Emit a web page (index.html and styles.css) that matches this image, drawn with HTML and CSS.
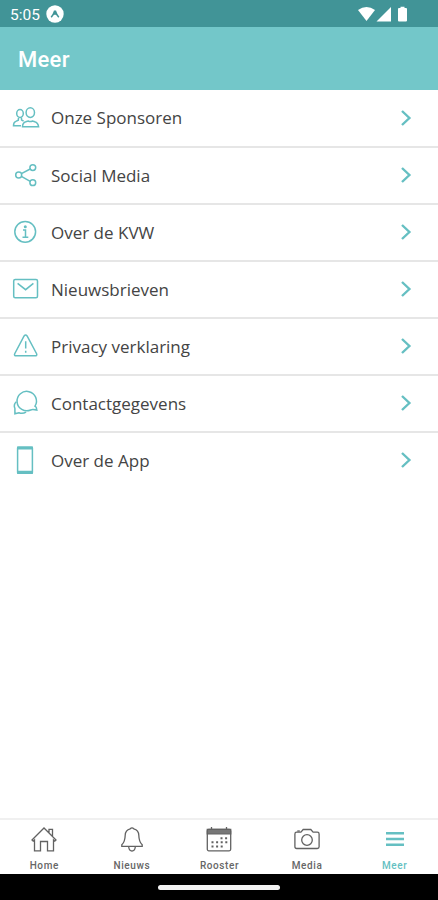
FILE: index.html
```html
<!DOCTYPE html>
<html lang="nl">
<head>
  <meta charset="UTF-8" />
  <meta name="viewport" content="width=device-width, initial-scale=1.0"/>
  <title>Meer</title>
  <link rel="stylesheet" href="styles.css">
</head>
<body>

  <div class="status-bar">
    <span class="time">5:05</span>
    <svg class="app-badge" width="18" height="18" viewBox="0 0 18 18"><circle cx="9" cy="9" r="8.7" fill="#fff"/><path d="M5.2 12.2Q7.6 9.5 8.5 6.2h1Q10.4 9.5 12.8 12.2M7.8 9.6 9 8.2l1.2 1.4" fill="none" stroke="#419497" stroke-width="1.5"/></svg>
    <svg class="signals" width="50" height="17" viewBox="0 0 50 17" fill="#fff"><path d="M0 4.1Q8.5-2.2 17 4.1L8.5 15z"/><path d="M18.5 15.5 33 1v14.5z"/><path d="M40 3q0-1 1-1h1.5V.7h4V2H48q1 0 1 1v11.5q0 1-1 1h-7q-1 0-1-1z"/></svg>
  </div>

  <header class="top-bar">
    <h1>Meer</h1>
  </header>

  <main class="menu">
    <a class="menu-item">
      <svg class="icon" viewBox="0 0 28 28"><ellipse cx="18.3" cy="8.6" rx="4.2" ry="4.8"/><path d="M10.5 22.8q.1-4.1 3.3-5l2.3-.8q2.2 1.2 4.4 0l2.3.8q3.2.9 3.8 5z"/><ellipse cx="8" cy="9.5" rx="3.3" ry="3.9"/><path d="M9 21.7H1.5q0-3.4 2.3-4.3l2.5-1.1.2-2.3M9.4 13.5l.2 2.6 2 .9"/></svg>
      <span class="label">Onze Sponsoren</span>
      <svg class="chevron" viewBox="0 0 12 18"><path d="M2 2l7.4 7L2 16"/></svg>
    </a>
    <a class="menu-item">
      <svg class="icon" viewBox="0 0 28 28"><circle cx="6.7" cy="14" r="3"/><circle cx="20.8" cy="6.6" r="2.9"/><circle cx="20.8" cy="21.7" r="2.9"/><path d="M9.4 12.6 18.2 8M9.4 15.4l8.8 4.9"/></svg>
      <span class="label">Social Media</span>
      <svg class="chevron" viewBox="0 0 12 18"><path d="M2 2l7.4 7L2 16"/></svg>
    </a>
    <a class="menu-item">
      <svg class="icon" viewBox="0 0 28 28"><circle cx="13.2" cy="13.8" r="10.4"/><path d="M11 12h2.5v7M10.5 19.2h5.8"/><circle class="solid" cx="13.3" cy="8.7" r="1.5"/></svg>
      <span class="label">Over de KVW</span>
      <svg class="chevron" viewBox="0 0 12 18"><path d="M2 2l7.4 7L2 16"/></svg>
    </a>
    <a class="menu-item">
      <svg class="icon" viewBox="0 0 28 28"><rect x="1.7" y="4.5" width="23.8" height="18.2" rx="1.5"/><path d="M5.6 8.4l8 6.3 7.8-6.3"/></svg>
      <span class="label">Nieuwsbrieven</span>
      <svg class="chevron" viewBox="0 0 12 18"><path d="M2 2l7.4 7L2 16"/></svg>
    </a>
    <a class="menu-item">
      <svg class="icon" viewBox="0 0 28 28"><path d="M12.1 4q1.5-2 3 0L24.6 21.7q.8 2.1-1.5 2.1H4.2q-2.4 0-1.5-2.1z"/><path d="M13.7 9.2v7.3M13.7 18.8v2"/></svg>
      <span class="label">Privacy verklaring</span>
      <svg class="chevron" viewBox="0 0 12 18"><path d="M2 2l7.4 7L2 16"/></svg>
    </a>
    <a class="menu-item">
      <svg class="icon" viewBox="0 0 28 28"><path d="M23 17.2A9.7 9.7 0 1 0 18.6 21q1.6-.6 2.4-.5l3.8.6-.5-2.4q-.2-.9-1.3-1.5z"/><path d="M4.3 12.8Q1.2 15.8 2.9 19.5v5.3l4-1.1q3.7 1.5 7.2-.6"/></svg>
      <span class="label">Contactgegevens</span>
      <svg class="chevron" viewBox="0 0 12 18"><path d="M2 2l7.4 7L2 16"/></svg>
    </a>
    <a class="menu-item">
      <svg class="icon" viewBox="0 0 28 28"><rect x="5.6" y="1.2" width="14.8" height="26" rx=".8"/><path class="solid" d="M5 .6h16v3H5zM5 24.8h16v3H5z"/></svg>
      <span class="label">Over de App</span>
      <svg class="chevron" viewBox="0 0 12 18"><path d="M2 2l7.4 7L2 16"/></svg>
    </a>
  </main>

  <nav class="tab-bar">
    <a class="tab">
      <svg viewBox="0 0 28 28"><path d="M2 15 14 3l12 12-1.2 1.2-1.3-1.2v10.8h-6v-9.3h-7v9.3h-6V15l-1.3 1.2zM19 7.5V4.4h3.5V11"/></svg>
      <span>Home</span>
    </a>
    <a class="tab">
      <svg viewBox="0 0 28 28"><path d="M12.2 3.8q1.8-2 3.6 0 4.9 1.2 5 6.5.2 6.7 3.4 9.5v1.6H3.8v-1.6q3.2-2.8 3.4-9.5.1-5.3 5-6.5zM10.7 22q.5 4 3.3 4t3.3-4"/></svg>
      <span>Nieuws</span>
    </a>
    <a class="tab">
      <svg viewBox="0 0 28 28"><rect x="2.3" y="4.5" width="23.4" height="21.3" rx="1.5"/><path class="bar" d="M2.3 4.3h23.4v4.5H2.3z"/><path d="M6.5 2v3M21.5 2v3"/><path class="dots" d="M15.5 13.3h7M6.5 17.3h16M6.5 21.6h12"/></svg>
      <span>Rooster</span>
    </a>
    <a class="tab">
      <svg viewBox="0 0 28 28"><path d="M3.7 7.2h4.2l2.3-2.7h7.6l2.3 2.7h4.2q1.8 0 1.8 1.8v12.7q0 1.8-1.8 1.8H3.7q-1.8 0-1.8-1.8V9q0-1.8 1.8-1.8z"/><path d="M4.3 6h2.5"/><circle cx="14" cy="15" r="5.3"/></svg>
      <span>Media</span>
    </a>
    <a class="tab active">
      <svg viewBox="0 0 28 28"><path d="M5 8.2h18M5 14h18M5 19.8h18"/></svg>
      <span>Meer</span>
    </a>
  </nav>

  <div class="gesture-bar">
    <div class="pill"></div>
  </div>

</body>
</html>
```

FILE: styles.css
```css
* {
  box-sizing: border-box;
}
body {
  margin: 0;
  height: 100vh;
  display: flex;
  flex-direction: column;
  overflow: hidden;
  background-color: #fff;
  font-family: 'Open Sans', sans-serif;
  color: #444;
}
svg {
  display: block;
  flex: none;
}
.status-bar {
  height: 27px;
  display: flex;
  align-items: center;
  padding: 1px 30px 0 10px;
  background-color: #419497;
  color: #fff;
  font-family: Roboto, sans-serif;
}
.time {
  padding-top: 1px;
  font-size: 15.5px;
  line-height: 20px;
}
.app-badge {
  margin-left: 6px;
}
.signals {
  margin-left: auto;
}
.top-bar {
  height: 63px;
  display: flex;
  align-items: center;
  padding: 1px 18px 0;
  background-color: #73c7c9;
}
h1 {
  margin: 0;
  color: #fff;
  font-family: Roboto, sans-serif;
  font-size: 22px;
  font-weight: 500;
  letter-spacing: 0.3px;
}
.menu {
  flex: 1;
}
.menu-item {
  height: 57px;
  display: flex;
  align-items: center;
  padding: 0 26px 1px 12px;
  border-bottom: 2px solid #e6e6e6;
}
.menu-item:first-child {
  height: 58px;
}
.menu-item:last-child {
  height: 55px;
  border-bottom: none;
}
.icon {
  width: 28px;
  height: 28px;
  fill: none;
  stroke: #65bfc2;
  stroke-width: 1.5;
}
.icon .solid {
  fill: #65bfc2;
  stroke: none;
}
.label {
  flex: 1;
  margin-left: 11px;
  font-size: 17px;
  font-weight: 400;
}
.chevron {
  width: 12px;
  height: 18px;
  fill: none;
  stroke: #65bfc2;
  stroke-width: 2.4;
}
.tab-bar {
  height: 56px;
  display: grid;
  grid-template-columns: repeat(5, 1fr);
  border-top: 2px solid #f0f0f0;
}
.tab {
  display: flex;
  flex-direction: column;
  align-items: center;
  padding: 5px 0 0 1px;
  color: #666;
  font-family: Roboto, sans-serif;
  font-size: 10px;
  font-weight: 500;
  line-height: 12px;
  letter-spacing: 0.6px;
}
.tab svg {
  width: 28px;
  height: 28px;
  fill: none;
  stroke: #626262;
  stroke-width: 1.3;
}
.tab span {
  margin-top: 7px;
}
.tab .bar {
  fill: #777;
}
.tab .dots {
  stroke-width: 2;
  stroke-dasharray: 2 2.6;
}
.tab.active {
  color: #65bfc2;
}
.tab.active svg {
  stroke: #65bfc2;
  stroke-width: 2.4;
}
.gesture-bar {
  height: 26px;
  display: flex;
  justify-content: center;
  align-items: center;
  background-color: #000;
}
.pill {
  width: 122px;
  height: 5px;
  border-radius: 3px;
  background-color: #f2f2f2;
}
```
